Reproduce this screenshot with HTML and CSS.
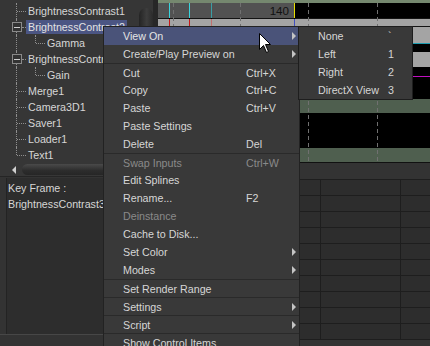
FILE: index.html
```html
<!DOCTYPE html>
<html>
<head>
<meta charset="utf-8">
<link rel="stylesheet" href="styles.css">
</head>
<body>
<div class="app">
  <div class="left">
    <div class="tree-pane">
      <div class="tree">
        <div class="row"><span class="sp0"></span><span class="hl0"></span><span class="label">BrightnessContrast1</span></div>
        <div class="row"><span class="spb"></span><span class="box"></span><span class="hlb"></span><span class="label sel">BrightnessContrast2</span></div>
        <div class="row child last-child"><span class="sp1"></span><span class="hl1"></span><span class="label">Gamma</span></div>
        <div class="row"><span class="spb"></span><span class="box"></span><span class="hlb"></span><span class="label">BrightnessContrast3</span></div>
        <div class="row child last-child"><span class="sp1"></span><span class="hl1"></span><span class="label">Gain</span></div>
        <div class="row"><span class="sp0"></span><span class="hl0"></span><span class="label">Merge1</span></div>
        <div class="row"><span class="sp0"></span><span class="hl0"></span><span class="label">Camera3D1</span></div>
        <div class="row"><span class="sp0"></span><span class="hl0"></span><span class="label">Saver1</span></div>
        <div class="row"><span class="sp0"></span><span class="hl0"></span><span class="label">Loader1</span></div>
        <div class="row last"><span class="sp0"></span><span class="hl0"></span><span class="label">Text1</span></div>
      </div>
      <div class="vscroll"><div class="vthumb"></div></div>
    </div>
    <div class="hscroll"><span class="harrow"></span><div class="hthumb"></div></div>
    <div class="kf-wrap">
      <div class="kf">
        <div class="kf-line">Key Frame :</div>
        <div class="kf-line">BrightnessContrast3</div>
      </div>
    </div>
    <div class="left-foot"></div>
  </div>
  <div class="split"></div>
  <div class="timeline">
    <div class="tl-green"></div>
    <div class="ruler"><div class="range-sel">140</div><div class="range-rest"></div></div>
    <div class="tl-line"></div>
    <div class="range-band"></div>
    <div class="tl-line"></div>
    <div class="tracks">
      <div class="trk light h16"></div>
      <div class="trk teal"></div>
      <div class="trk black h8"></div>
      <div class="trk light h15"></div>
      <div class="trk black h9"></div>
      <div class="trk magenta"></div>
      <div class="trk black h22"></div>
      <div class="trk green h14"></div>
      <div class="trk black h35"></div>
      <div class="trk green h14"></div>
      <div class="trk dark"></div>
    </div>
    <div class="grid-head"></div>
    <div class="grid">
      <div></div><div></div><div></div>
      <div></div><div></div><div></div>
      <div></div><div></div><div></div>
      <div></div><div></div><div></div>
      <div></div><div></div><div></div>
      <div></div><div></div><div></div>
      <div></div><div></div><div></div>
      <div></div><div></div><div></div>
      <div></div><div></div><div></div>
      <div></div><div></div><div></div>
    </div>
    <div class="markers">
      <div class="mk cy" style="left:11px"></div>
      <div class="mk dash" style="left:15px"></div>
      <div class="mk cy" style="left:31px"></div>
      <div class="mk teal2" style="left:53px"></div>
      <div class="mk dash" style="left:82px"></div>
      <div class="mk yel" style="left:136px"></div>
      <div class="mk dash" style="left:150px"></div>
      <div class="mk dash" style="left:219px"></div>
    </div>
  </div>
</div>

<div class="menu">
  <div class="mi hl"><span class="ml">View On</span><span class="ms"></span><span class="arr"></span></div>
  <div class="mi"><span class="ml">Create/Play Preview on</span><span class="ms"></span><span class="arr"></span></div>
  <div class="mi sep"><span class="ml">Cut</span><span class="ms">Ctrl+X</span></div>
  <div class="mi"><span class="ml">Copy</span><span class="ms">Ctrl+C</span></div>
  <div class="mi"><span class="ml">Paste</span><span class="ms">Ctrl+V</span></div>
  <div class="mi"><span class="ml">Paste Settings</span><span class="ms"></span></div>
  <div class="mi"><span class="ml">Delete</span><span class="ms">Del</span></div>
  <div class="mi sep dis"><span class="ml">Swap Inputs</span><span class="ms">Ctrl+W</span></div>
  <div class="mi"><span class="ml">Edit Splines</span><span class="ms"></span></div>
  <div class="mi"><span class="ml">Rename...</span><span class="ms">F2</span></div>
  <div class="mi dis"><span class="ml">Deinstance</span><span class="ms"></span></div>
  <div class="mi"><span class="ml">Cache to Disk...</span><span class="ms"></span></div>
  <div class="mi"><span class="ml">Set Color</span><span class="ms"></span><span class="arr"></span></div>
  <div class="mi"><span class="ml">Modes</span><span class="ms"></span><span class="arr"></span></div>
  <div class="mi sep"><span class="ml">Set Render Range</span><span class="ms"></span></div>
  <div class="mi sep"><span class="ml">Settings</span><span class="ms"></span><span class="arr"></span></div>
  <div class="mi sep"><span class="ml">Script</span><span class="ms"></span><span class="arr"></span></div>
  <div class="mi sep"><span class="ml">Show Control Items</span><span class="ms"></span></div>
</div>

<div class="submenu">
  <div class="si"><span class="sl">None</span><span class="ss">`</span></div>
  <div class="si"><span class="sl">Left</span><span class="ss">1</span></div>
  <div class="si"><span class="sl">Right</span><span class="ss">2</span></div>
  <div class="si"><span class="sl">DirectX View</span><span class="ss">3</span></div>
</div>

<svg class="cursor" width="13" height="21" viewBox="0 0 13 21">
  <path d="M0.5,0.5 L0.5,16.5 L4.5,12.5 L7.5,19.5 L9.5,18.5 L6.5,11.5 L11.5,11.5 Z" fill="#fff" stroke="#000" stroke-width="1"/>
</svg>
</body>
</html>
```

FILE: styles.css
```css
* { box-sizing: border-box; }
html, body {
  margin: 0;
  padding: 0;
}
body {
  width: 430px;
  height: 346px;
  overflow: hidden;
  position: relative;
  background: #333333;
  font-family: "Liberation Sans", Arial, sans-serif;
  font-size: 10.7px;
  color: #d6d6d6;
}

.app {
  display: flex;
  height: 346px;
}

/* ---------- left column ---------- */
.left {
  width: 153px;
  display: flex;
  flex-direction: column;
  background: #333333;
}
.tree-pane {
  display: flex;
  height: 163px;
  background: #363636;
}
.tree {
  width: 139px;
  padding-top: 3px;
  overflow: hidden;
  position: relative;
}
.row {
  height: 16px;
  display: flex;
  align-items: center;
  position: relative;
  white-space: nowrap;
}
.row::before {
  content: "";
  position: absolute;
  left: 16px;
  top: 0;
  bottom: 0;
  border-left: 1px dotted #8e8e8e;
}
.row.last::before { bottom: 8px; }
.row.child::after {
  content: "";
  position: absolute;
  left: 35px;
  top: 0;
  height: 8px;
  border-left: 1px dotted #8e8e8e;
}
.sp0 { width: 17px; flex: none; }
.hl0 { width: 9px; flex: none; border-top: 1px dotted #8e8e8e; }
.spb { width: 12px; flex: none; }
.box {
  width: 10px;
  height: 10px;
  flex: none;
  position: relative;
  z-index: 1;
  border: 1px solid #8a8a8a;
  background: #333;
  display: flex;
  align-items: center;
  justify-content: center;
}
.box::after {
  content: "";
  width: 6px;
  height: 1px;
  background: #d0d0d0;
}
.hlb { width: 4px; flex: none; border-top: 1px dotted #8e8e8e; }
.sp1 { width: 36px; flex: none; }
.hl1 { width: 9px; flex: none; border-top: 1px dotted #8e8e8e; }
.label {
  padding: 0 2px;
  line-height: 14px;
}
.label.sel {
  background: #4b5583;
  color: #e2e2e2;
}

.vscroll {
  width: 14px;
  padding-top: 8px;
}
.vthumb {
  height: 200px;
  border-radius: 7px 7px 0 0;
  background: linear-gradient(to right, #242424, #3d3d3d 55%, #2a2a2a);
}

.hscroll {
  height: 13px;
  display: flex;
  align-items: center;
  background: #363636;
}
.harrow {
  width: 0;
  height: 0;
  margin-left: 12px;
  border-right: 4px solid #d0d0d0;
  border-top: 4px solid transparent;
  border-bottom: 4px solid transparent;
}
.hthumb {
  margin-left: 6px;
  flex: 1;
  height: 11px;
  border-radius: 6px 0 0 6px;
  background: linear-gradient(to bottom, #4a4a4a, #2c2c2c 60%, #262626);
}

.kf-wrap {
  height: 158px;
  padding-left: 6px;
  padding-top: 1px;
  border-top: 1px solid #252525;
}
.kf {
  height: 100%;
  background: #2d2d2d;
  border-left: 1px solid #232323;
  padding-top: 2px;
  padding-left: 1px;
  white-space: nowrap;
  overflow: hidden;
}
.kf-line {
  line-height: 16px;
}
.left-foot {
  flex: 1;
  border-top: 1px solid #474747;
}

.split {
  width: 5px;
  background: #272727;
}

/* ---------- timeline ---------- */
.timeline {
  flex: 1;
  display: flex;
  flex-direction: column;
  position: relative;
  background: #333333;
}
.tl-green { height: 3px; background: #75886f; }
.ruler { height: 15px; display: flex; }
.range-sel {
  width: 136px;
  background: #525252;
  color: #111;
  font-size: 11.6px;
  text-align: right;
  padding-right: 5px;
  line-height: 15px;
}
.range-rest { flex: 1; background: #000; }
.tl-line { height: 1px; background: #141414; }
.range-band { height: 7px; background: #a4a4a4; }

.tracks { display: flex; flex-direction: column; }
.trk { height: 1px; }
.trk.light { background: #a4a4a4; }
.trk.black { background: #000; }
.trk.green { background: #4f5f4f; }
.trk.teal { background: #1c9cb0; }
.trk.magenta { background: #c010c0; }
.trk.dark { background: #111; }
.h8 { height: 8px; }
.h9 { height: 9px; }
.h14 { height: 14px; }
.h15 { height: 15px; }
.h16 { height: 16px; }
.h22 { height: 22px; }
.h35 { height: 35px; }

.grid-head { height: 16px; background: #333333; }
.grid {
  display: grid;
  grid-template-columns: 162px 80px 1fr;
  grid-auto-rows: 16px;
  border-bottom: 1px solid #1e1e1e;
}
.grid div {
  background: #2d2d2d;
  border-top: 1px solid #1e1e1e;
  border-left: 1px solid #1e1e1e;
}

.markers {
  position: absolute;
  left: 0;
  right: 0;
  top: 3px;
  height: 160px;
  pointer-events: none;
}
.mk {
  position: absolute;
  top: 0;
  width: 1px;
  height: 23px;
}
.mk.cy { background: linear-gradient(to bottom, #3ad4dc 0 15px, #000 15px 16px, #c81818 16px 23px); }
.mk.teal2 { background: linear-gradient(to bottom, #3a9ea4 0 15px, #000 15px 16px, #c07070 16px 23px); }
.mk.yel { background: linear-gradient(to bottom, #e8e000 0 15px, #000 15px 16px, #4050c0 16px 23px); }
.mk.dash {
  height: 160px;
  background: repeating-linear-gradient(to bottom, #707070 0 4px, transparent 4px 7px);
}

/* ---------- context menu ---------- */
.menu {
  position: absolute;
  left: 103px;
  top: 26px;
  width: 197px;
  height: 340px;
  background: #393939;
  border: 1px solid #222;
  border-bottom: none;
}
.mi {
  height: 18px;
  display: flex;
  align-items: center;
  padding-left: 19px;
  white-space: nowrap;
}
.mi.sep { border-top: 1px solid #2a2a2a; }
.mi.hl { background: #4a5379; color: #e4e4e4; }
.mi.dis { color: #8a8a8a; }
.ml { width: 123px; flex: none; }
.ms { flex: 1; }
.arr {
  width: 0;
  height: 0;
  margin-right: 3px;
  border-left: 4px solid #c4c4c4;
  border-top: 4px solid transparent;
  border-bottom: 4px solid transparent;
}

.submenu {
  position: absolute;
  left: 298px;
  top: 26px;
  width: 115px;
  height: 74px;
  background: #393939;
  border: 1px solid #1e1e1e;
}
.si {
  height: 18px;
  display: flex;
  align-items: center;
  padding-left: 19px;
  white-space: nowrap;
}
.sl { width: 70px; flex: none; }

.cursor {
  position: absolute;
  left: 259px;
  top: 33px;
}
```
